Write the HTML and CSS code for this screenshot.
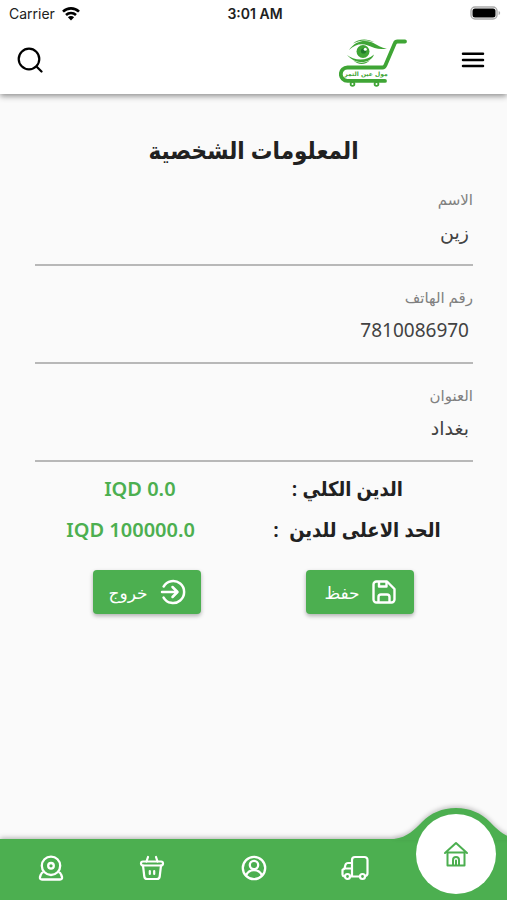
FILE: index.html
```html
<!DOCTYPE html>
<html lang="ar" dir="rtl">
<head>
  <meta charset="UTF-8">
  <title>المعلومات الشخصية</title>
  <meta name="viewport" content="width=device-width, initial-scale=1.0">
  <link rel="stylesheet" href="styles.css">
</head>
<body>
  <header class="app-header">
    <!-- Status bar -->
    <div class="status-bar" dir="ltr">
      <span class="carrier">
        Carrier
        <svg width="20" height="15" viewBox="0 0 20 15">
          <path d="M2 5.6a11.6 11.6 0 0 1 16 0M5 9a7.3 7.3 0 0 1 10 0" fill="none" stroke="#000" stroke-width="2.6"/>
          <path d="M10 14.4L6.9 11.2a4.4 4.4 0 0 1 6.2 0z"/>
        </svg>
      </span>
      <span class="time">3:01 AM</span>
      <span class="battery">
        <svg width="31" height="14" viewBox="0 0 31 14">
          <rect x="1" y="1" width="26" height="12" rx="4" fill="#fff" stroke="#aaa" stroke-width="1.4"/>
          <rect x="2.500" y="2.500" width="23" height="9" rx="2.500"/>
          <path d="M28.6 5v4q1.6-.6 1.6-2t-1.6-2z" fill="#aaa"/>
        </svg>
      </span>
    </div>

    <!-- Toolbar -->
    <div class="toolbar">
      <button type="button" class="icon-btn" aria-label="القائمة">
        <svg width="24" height="24" viewBox="0 0 24 24" fill="none" stroke="#000" stroke-width="2.5" stroke-linecap="round">
          <path d="M2 5.8h20M2 12h20M2 18h20"/>
        </svg>
      </button>
      <a href="#" class="logo" aria-label="مول عين التمر">
        <svg width="70" height="50" viewBox="0 0 70 50">
          <g fill="none" stroke="#3fa535" stroke-linecap="round" stroke-linejoin="round">
            <path d="M66 3.500h-7.500q-2 0-2.800 2L46.500 27q-1 2.500-3 2.500H8.500a6.700 6.700 0 0 0 0 13.400h37.500" stroke-width="3.800"/>
            <circle cx="13.500" cy="46" r="1.900" stroke-width="1.800"/>
            <circle cx="37.500" cy="46" r="1.900" stroke-width="1.800"/>
          </g>
          <g fill="#3fa535">
            <path d="M10 12C16 3 25 1.500 32 4c7 3 10 6 16 6.500-8 1.500-13-.5-19-3C22 5 16 6.500 10 12z"/>
            <path d="M14 5.500C19 .8 28 0 35 4c-8-2.500-14-2-21 1.500z"/>
            <path d="M8 17c6 5 19 7 27-.5-3 8.500-17 11.500-27 .5z"/>
            <path d="M14 22c5 3.500 12 3.500 17 0-4 5-12 5.500-17 0z"/>
            <circle cx="24" cy="13.500" r="6.500"/>
          </g>
          <circle cx="24.500" cy="13" r="2.600" fill="#1f7a2a"/>
          <circle cx="26.300" cy="11.200" r="1.500" fill="#fff"/>
          <text class="logo-text" x="27" y="38" text-anchor="middle">مول عين التمر</text>
        </svg>
      </a>
      <button type="button" class="icon-btn search-btn" aria-label="بحث">
        <svg width="26" height="26" viewBox="0 0 26 26" fill="none" stroke="#000" stroke-width="2.200" stroke-linecap="round">
          <circle cx="12" cy="12" r="10.300"/>
          <path d="M19.500 19.500L24.500 24.500"/>
        </svg>
      </button>
    </div>
  </header>

  <main>
    <h1>المعلومات الشخصية</h1>
    <form id="profileForm">
      <div class="form-group">
        <label for="name">الاسم</label>
        <input type="text" id="name" name="name" value="زين">
      </div>
      <div class="form-group">
        <label for="phone">رقم الهاتف</label>
        <input type="text" id="phone" name="phone" value="7810086970">
      </div>
      <div class="form-group">
        <label for="address">العنوان</label>
        <input type="text" id="address" name="address" value="بغداد">
      </div>
    </form>

    <!-- Debt summary -->
    <div class="row debt">
      <span>الدين الكلي :</span>
      <span class="amount" dir="ltr">IQD 0.0</span>
    </div>
    <div class="row debt">
      <span>الحد الاعلى للدين&nbsp; :</span>
      <span class="amount" dir="ltr">IQD 100000.0</span>
    </div>

    <div class="row actions">
      <button type="submit" form="profileForm" class="btn">
        <svg width="24" height="24" viewBox="0 0 24 24" fill="none" stroke="#fff" stroke-width="2.400" stroke-linejoin="round">
          <path d="M4.500 1.500H15L22.500 9v10.500a3 3 0 0 1-3 3h-15a3 3 0 0 1-3-3v-15a3 3 0 0 1 3-3z"/>
          <path d="M7 2v4.500h7.500V2M6.500 22v-5a2.500 2.500 0 0 1 2.500-2.500h6a2.500 2.500 0 0 1 2.500 2.500v5"/>
        </svg>
        حفظ
      </button>
      <button type="button" class="btn">
        <svg width="26" height="26" viewBox="0 0 26 26" fill="none" stroke="#fff" stroke-width="2.500" stroke-linecap="round" stroke-linejoin="round">
          <path d="M3.600 7.500a11 11 0 1 1 0 11"/>
          <path d="M2 13h15M12.500 8l5 5-5 5"/>
        </svg>
        خروج
      </button>
    </div>
  </main>

  <!-- Bottom navigation -->
  <nav class="bottom-nav">
    <a href="#" class="active" aria-label="الرئيسية">
      <svg class="bump" width="124" height="32" viewBox="0 0 124 32">
        <path d="M0 32v-1C14 29 20 22 28 14 37 5 48 0 62 0s25 5 34 14c8 8 14 15 28 17v1z" fill="#4caf50"/>
      </svg>
      <span class="bubble">
        <svg width="26" height="26" viewBox="0 0 26 26" fill="none" stroke="#4caf50" stroke-width="2" stroke-linecap="round" stroke-linejoin="round">
          <path d="M2 12L13 2l11 10M4.500 11v13.500h17V11M5 11.500h16"/>
          <path d="M10 24v-5a3 3 0 0 1 6 0v5M13 19.500V24"/>
        </svg>
      </span>
    </a>
    <a href="#" aria-label="الطلبات">
      <svg width="28" height="26" viewBox="0 0 28 26" fill="none" stroke="#fff" stroke-width="2.200" stroke-linejoin="round">
        <path d="M11 21V5a3 3 0 0 1 3-3h9.500a3 3 0 0 1 3 3v13a3 3 0 0 1-2 3M18.500 21.500H10"/>
        <path d="M11 8H7q-2 0-2.600 2L3.500 13.500 1.500 15v4.500q0 1.500 1.500 1.800M4 13.500h7"/>
        <circle cx="6.500" cy="21.500" r="2.500"/>
        <circle cx="21.500" cy="21.500" r="2.500"/>
      </svg>
    </a>
    <a href="#" aria-label="حسابي">
      <svg width="26" height="26" viewBox="0 0 26 26" fill="none" stroke="#fff" stroke-width="2.300">
        <circle cx="13" cy="13" r="11.200"/>
        <circle cx="13" cy="10" r="4.200"/>
        <path d="M5 20.500c1.500-3.500 4.500-5.300 8-5.300s6.500 1.800 8 5.300"/>
      </svg>
    </a>
    <a href="#" aria-label="السلة">
      <svg width="26" height="26" viewBox="0 0 26 26" fill="none" stroke="#fff" stroke-width="2.200" stroke-linecap="round" stroke-linejoin="round">
        <path d="M9 2L7.500 6.500M17 2l1.500 4.500"/>
        <rect x="2" y="6.500" width="22" height="4" rx="2"/>
        <path d="M4 10.500l1.300 11q.3 2.500 2.800 2.500h9.800q2.500 0 2.800-2.500l1.300-11M10.800 16v3M15.200 16v3"/>
      </svg>
    </a>
    <a href="#" aria-label="الكاميرا">
      <svg width="26" height="26" viewBox="0 0 26 26" fill="none" stroke="#fff" stroke-width="2.300" stroke-linejoin="round">
        <circle cx="13" cy="10.800" r="9.200"/>
        <circle cx="13" cy="10.800" r="2.800"/>
        <path d="M5.500 17q-2 .5-2.800 3l-.7 2q-.5 2.500 2 2.500h18q2.500 0 2-2.500l-.7-2q-.8-2.500-2.800-3"/>
      </svg>
    </a>
  </nav>
</body>
</html>
```

FILE: styles.css
```css
/* Reset & Base Styles */
* {
  box-sizing: border-box;
  margin: 0;
  padding: 0;
}
body {
  font-family: "Noto Sans", "DejaVu Sans", sans-serif;
  background: #fafafa;
  color: #212121;
  display: flex;
  flex-direction: column;
  min-height: 100vh;
  overflow-x: clip;
}
svg {
  display: block;
}
button {
  font-family: inherit;
  border: none;
  cursor: pointer;
}
/* Header */
.app-header {
  background: #fff;
  box-shadow: 0 2px 6px rgba(0, 0, 0, 0.45);
}
.status-bar {
  display: grid;
  grid-template-columns: 1fr auto 1fr;
  align-items: center;
  height: 26px;
  padding: 0 6px 0 9px;
  font-family: Inter, sans-serif;
  font-size: 14px;
}
.carrier {
  display: flex;
  align-items: center;
  gap: 6px;
}
.time {
  font-weight: 600;
}
.battery {
  justify-self: end;
}
.toolbar {
  display: flex;
  align-items: center;
  height: 68px;
  padding: 0 22px 0 17px;
}
.icon-btn {
  background: none;
}
.logo {
  margin-right: 52px;
  padding-top: 6px;
}
.logo-text {
  font-family: "DejaVu Sans", sans-serif;
  font-size: 6px;
  font-weight: bold;
  fill: #3fa535;
}
.search-btn {
  margin-right: auto;
}
/* Profile */
main {
  flex: 1;
  padding-top: 36px;
}
h1 {
  font-family: "Noto Sans", "DejaVu Sans Condensed", "DejaVu Sans", sans-serif;
  font-size: 24px;
  line-height: 40px;
  text-align: center;
}
form {
  display: flex;
  flex-direction: column;
  gap: 18px;
  padding: 16px 34px 6px 35px;
}
label {
  display: block;
  font-size: 15px;
  line-height: 26px;
  color: #808080;
}
input {
  display: block;
  width: 100%;
  height: 54px;
  padding: 0 4px 12px;
  font-family: inherit;
  font-size: 19px;
  color: #424242;
  background: none;
  border: none;
  border-bottom: 2px solid #b8b8b8;
  outline: none;
}
input:focus {
  border-color: #4caf50;
}
.row {
  display: flex;
  justify-content: space-evenly;
  gap: 12px;
}
.debt {
  font-family: "Noto Sans", "DejaVu Sans Condensed", "DejaVu Sans", sans-serif;
  font-size: 20px;
  font-weight: 600;
  line-height: 41px;
}
.amount {
  color: #4caf50;
}
.actions {
  padding: 20px 0;
}
.btn {
  display: flex;
  align-items: center;
  justify-content: center;
  gap: 12px;
  width: 108px;
  height: 44px;
  font-size: 17px;
  color: #fff;
  background: #4caf50;
  border-radius: 4px;
  box-shadow: 0 2px 4px rgba(0, 0, 0, 0.3);
}
/* Bottom Navigation */
.bottom-nav {
  display: grid;
  grid-template-columns: repeat(5, 1fr);
  height: 61px;
  background: #4caf50;
  box-shadow: 0 -1px 5px rgba(0, 0, 0, 0.3);
}
.bottom-nav a {
  position: relative;
  display: flex;
  align-items: center;
  justify-content: center;
  padding-bottom: 4px;
}
/* Raised circle of the current tab */
.bump {
  position: absolute;
  top: -31px;
  left: 50%;
  margin-left: -62px;
  filter: drop-shadow(0 -2px 2px rgba(0, 0, 0, 0.2));
}
.bubble {
  position: absolute;
  top: -25px;
  left: 50%;
  display: flex;
  align-items: center;
  justify-content: center;
  width: 80px;
  height: 80px;
  margin-left: -40px;
  background: #fff;
  border-radius: 50%;
}
```
